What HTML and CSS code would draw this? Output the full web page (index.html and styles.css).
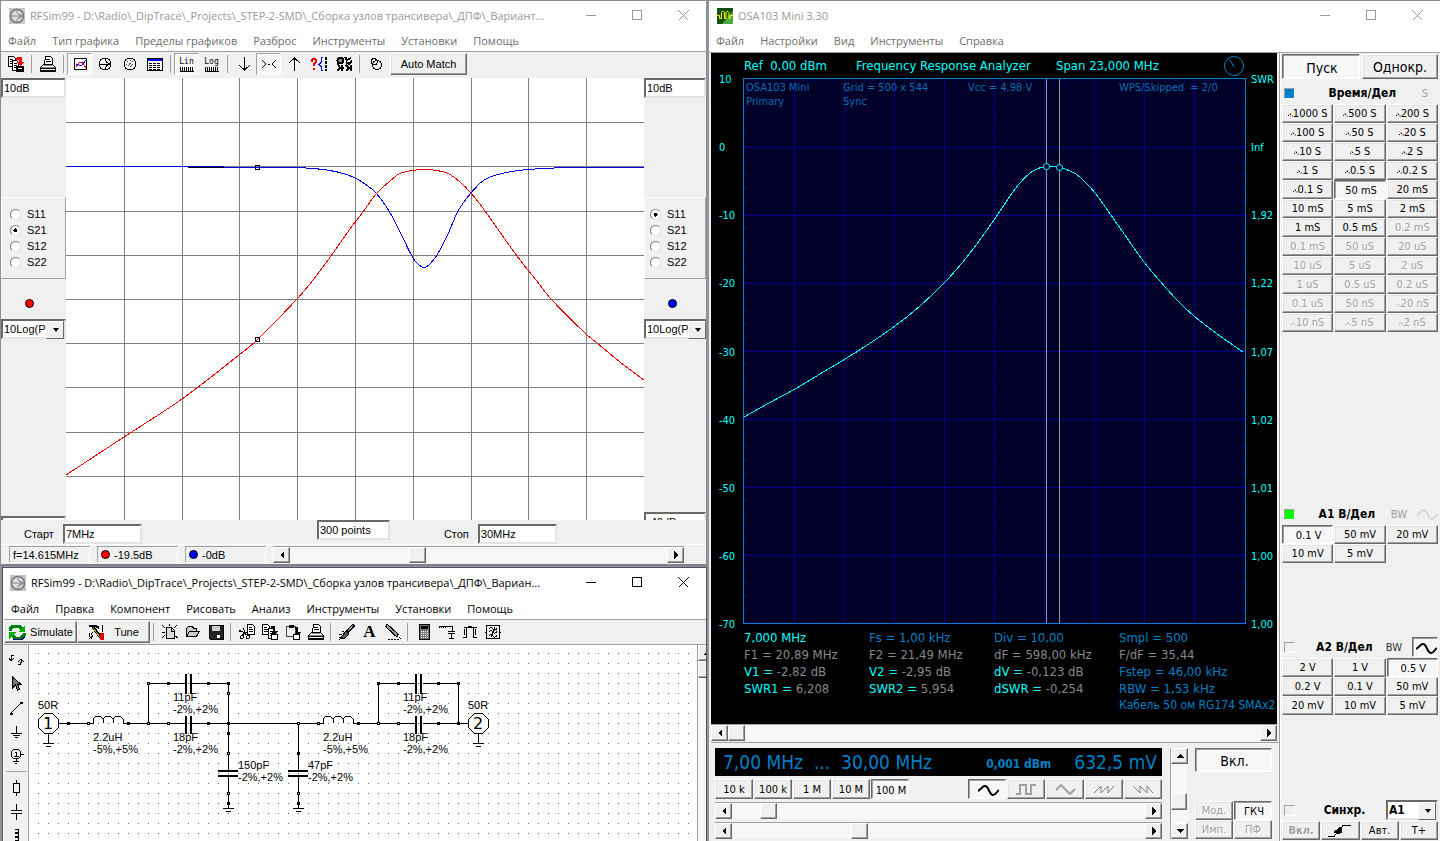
FILE: index.html
```html
<!DOCTYPE html>
<html lang="ru">
<head>
  <meta charset="UTF-8">
  <title>RFSim99 / OSA103 Mini</title>
  <link rel="stylesheet" href="styles.css">
</head>
<body>

  <!-- Общие значки -->
  <svg class="defs">
    <symbol id="app" viewBox="0 0 16 16">
      <path d="M0 0h16v16H0z" fill="#c4c4c4" stroke="none"/>
      <circle cx="8" cy="8" r="6.5" fill="#ddd" stroke="#777" stroke-width="1.5"/>
      <path d="M1 8h13M8 2q-1 5 6 6M8 14q-1-5 6-6M10 6l3 2-3 3" fill="none" stroke="#888"/>
    </symbol>
    <symbol id="min" viewBox="0 0 11 11"><path d="M0 5.5h10"/></symbol>
    <symbol id="max" viewBox="0 0 11 11"><path d="M.5.5h9v9h-9z"/></symbol>
    <symbol id="close" viewBox="0 0 11 11"><path d="M.5.5l10 10M10.500.5l-10 10"/></symbol>
    <symbol id="left" viewBox="0 0 8 8"><path d="M6 0v8L2 4z" fill="#000" stroke="none"/></symbol>
    <symbol id="right" viewBox="0 0 8 8"><path d="M2 0v8l4-4z" fill="#000" stroke="none"/></symbol>
    <symbol id="up" viewBox="0 0 8 8"><path d="M0 6h8L4 2z" fill="#000" stroke="none"/></symbol>
    <symbol id="down" viewBox="0 0 8 8"><path d="M0 2h8L4 6z" fill="#000" stroke="none"/></symbol>
    <symbol id="sine" viewBox="0 0 21 11"><path d="M0 6C4 4 4 1 7 1c4 0 4 9 8 9 3 0 3-3 6-5"/></symbol>
    <symbol id="printer" viewBox="0 0 16 16">
      <path d="M4.500 8.500l1-8h5l2 2v6M6 3.500h4M6 5.500h5M.5 11.500l3-3h9l3 3v3h-15z" fill="#fff"/>
      <path d="M1 11.500h14M4 9.500h8" stroke="#888"/><path d="M0 12.500h16M0 15.500h16"/>
    </symbol>
    <symbol id="copy" viewBox="0 0 16 16">
      <path d="M.5.5h5l2 2v8h-7zM2 3.500h3M2 5.500h4M2 7.500h4" fill="#fff"/>
      <path d="M6.500 4.500h4l2 2v8h-6zM8 7.500h3M8 9.500h3M8 11.500h3" fill="#fff"/>
      <path d="M9 2h4v5h3l-4 4-3-3h2V4H9z" fill="#000" stroke="none"/>
      <path d="M9.500 10.500h6v5h-6z" fill="#fff"/>
    </symbol>
  </svg>

  <main class="desktop">

    <div class="left">

      <!-- Графики RFSim99 -->
      <section class="window inactive charts">
        <header class="titlebar">
          <svg class="app"><use href="#app"/></svg>
          <h1>RFSim99 - D:\Radio\_DipTrace\_Projects\_STEP-2-SMD\_Сборка узлов трансивера\_ДПФ\_Вариант...</h1>
          <button aria-label="Свернуть"><svg><use href="#min"/></svg></button>
          <button aria-label="Развернуть"><svg><use href="#max"/></svg></button>
          <button aria-label="Закрыть"><svg><use href="#close"/></svg></button>
        </header>
        <nav class="menu">
          <button>Файл</button><button>Тип графика</button><button>Пределы графиков</button><button>Разброс</button><button>Инструменты</button><button>Установки</button><button>Помощь</button>
        </nav>
        <div class="toolbar">
          <button aria-label="Копировать и сохранить">
            <svg viewBox="0 0 16 16">
              <path d="M.5.5h5l2 2v8h-7zM2 3.500h3M2 5.500h4M2 7.500h4" fill="#fff"/>
              <path d="M4.500 4.500h4l2 2v8h-6zM6 7.500h3M6 9.500h3M6 11.500h3" fill="#fff"/>
              <path d="M9 1h4l1 1v4h2l-4 4-4-4h3V4H8z" fill="#f00" stroke="none"/>
              <path d="M8.500 10.500h7v5h-7z" fill="#000"/><path d="M10 12.500h4" stroke="#fff"/>
            </svg>
          </button>
          <i class="sep"></i>
          <button aria-label="Печать"><svg><use href="#printer"/></svg></button>
          <i class="sep"></i>
          <button class="down" aria-label="График">
            <svg viewBox="0 0 16 16"><path d="M2.500 2.500h12v11h-12z" fill="#fff"/><path d="M4 11l3-4 3-1 4 6" stroke="#f00"/><path d="M4 8l3 1h3l4-5" stroke="#00f"/></svg>
          </button>
          <button aria-label="Диаграмма Смита">
            <svg viewBox="0 0 16 16"><circle cx="8" cy="8" r="6"/><path d="M2 8h12M8 2q0 5 6 6M8 14q0-5 6-6"/></svg>
          </button>
          <button aria-label="Полярный график">
            <svg viewBox="0 0 16 16"><circle cx="8" cy="8" r="6"/><path d="M4 8h9M8 4v9M5 5l6 6M11 5l-6 6" stroke-dasharray="1 2" stroke="#555"/></svg>
          </button>
          <button aria-label="Таблица">
            <svg viewBox="0 0 16 16"><path d="M.5 2.500h15v12H.5z" fill="#fff"/><path d="M1 4h14" stroke="#00f" stroke-width="2"/><path d="M2 7.500h12M2 9.500h12M2 11.500h12M2 13.500h12" stroke-dasharray="3 1"/></svg>
          </button>
          <i class="sep"></i>
          <button class="down scale">Lin</button>
          <button class="scale">Log</button>
          <i class="sep"></i>
          <button aria-label="Вниз"><svg viewBox="0 0 16 16"><path d="M8.500 1v13M3 9l5.500 5L14 9"/></svg></button>
          <button class="down" aria-label="Сжать"><svg viewBox="0 0 16 16"><path d="M1 4l4 4-4 4M15 4l-4 4 4 4M7 8.500h2"/></svg></button>
          <button aria-label="Вверх"><svg viewBox="0 0 16 16"><path d="M8.500 15V2M3 7l5.500-5L14 7"/></svg></button>
          <button aria-label="Параметры">
            <svg viewBox="0 0 16 16"><path d="M1 6V4l1-1h2l1 1v2L3 8v2M3 12v2" stroke="#f00" stroke-width="2"/><path d="M12 1.500h-2v5l-2 2 2 2v4h2" stroke="#00f"/><path d="M15 1v14" stroke-width="2" stroke-dasharray="3 1"/></svg>
          </button>
          <button aria-label="Оптимизация">
            <svg viewBox="0 0 16 16"><circle cx="4.5" cy="4.5" r="3" fill="#888" stroke-width="2"/><path d="M9 1l2 3 4-2M10 6l3 2 3-3M2 8l2 4-3 3M6 9v6M3 12h5M10 9l3 3-3 3M15 9v6" stroke-width="2"/></svg>
          </button>
          <i class="sep"></i>
          <button aria-label="Подстройка">
            <svg viewBox="0 0 16 16"><circle cx="9" cy="9" r="4.5"/><path d="M3 4l3-2 4 3-2 4-4-1z"/></svg>
          </button>
          <button class="raised auto">Auto Match</button>
        </div>

        <div class="graph">
          <aside class="side">
            <input class="field" aria-label="Верхний предел слева" value="10dB">
            <fieldset>
              <label><input type="radio" name="l">S11</label>
              <label><input type="radio" name="l" checked>S21</label>
              <label><input type="radio" name="l">S12</label>
              <label><input type="radio" name="l">S22</label>
            </fieldset>
            <i class="dot red"></i>
            <span class="combo"><select aria-label="Формат слева"><option>10Log(P)</option></select></span>
            <span class="cut"><input class="field" aria-label="Нижний предел слева"></span>
          </aside>

          <svg class="plot" viewBox="66 78 578 442" preserveAspectRatio="none">
            <path class="grid" d="M124.500 78v442M182.500 78v442M239.500 78v442M297.500 78v442M355.500 78v442M413.500 78v442M471.500 78v442M528.500 78v442M586.500 78v442M66 122.500h578M66 166.500h578M66 211.500h578M66 255.500h578M66 299.500h578M66 343.500h578M66 387.500h578M66 432.500h578M66 476.500h578"/>
            <path d="M188 167.500h106M554 167.500h90" stroke="#000"/>
            <path class="curve" stroke="#0000e8" data-points="66,166.5 187,166.5 257,167.5 294,167.5 313,168.5 330,170.5 345,174 355,178 365,184 376,193 389,211 400,232 413,258 419,265 424,267.5 429,265 437,255 448,234 458,211 471,193 484,180 500,174 515,171 528,169.5 554,168 600,167.5 644,167.5"/>
            <path class="curve" stroke="#e80000" data-points="66,475 124,437 182,399 239,355 257,340 297,299 313,280 331,256 350,229 363,212 376,194 389,182 399,174 412,170.500 424,169.500 437,170.500 449,174 460,182 471,193 485,211 517,256 536,280 551,299 586,334 597,343 620,362 644,380"/>
            <path d="M255.500 165.500h4v4h-4zM255.500 337.500h4v4h-4z" stroke="#000" fill="none"/>
          </svg>

          <aside class="side right">
            <input class="field" aria-label="Верхний предел справа" value="10dB">
            <fieldset>
              <label><input type="radio" name="r" checked>S11</label>
              <label><input type="radio" name="r">S21</label>
              <label><input type="radio" name="r">S12</label>
              <label><input type="radio" name="r">S22</label>
            </fieldset>
            <i class="dot blue"></i>
            <span class="combo"><select aria-label="Формат справа"><option>10Log(P)</option></select></span>
            <span class="cut"><input class="field" aria-label="Нижний предел справа" value="-40dB"></span>
          </aside>
        </div>

        <div class="sweep">
          <label>Старт <input class="field" value="7MHz"></label>
          <input class="field points" aria-label="Число точек" value="300 points">
          <label>Стоп <input class="field" value="30MHz"></label>
        </div>
        <footer class="status">
          <output>f=14.615MHz</output>
          <output><i class="dot red"></i>-19.5dB</output>
          <output><i class="dot blue"></i>-0dB</output>
          <div class="scroll">
            <button aria-label="Влево"><svg><use href="#left"/></svg></button>
            <input type="range" aria-label="Маркер" value="33">
            <button aria-label="Вправо"><svg><use href="#right"/></svg></button>
          </div>
        </footer>
      </section>

      <!-- Схема RFSim99 -->
      <section class="window schematic">
        <header class="titlebar">
          <svg class="app"><use href="#app"/></svg>
          <h1>RFSim99 - D:\Radio\_DipTrace\_Projects\_STEP-2-SMD\_Сборка узлов трансивера\_ДПФ\_Вариан...</h1>
          <button aria-label="Свернуть"><svg><use href="#min"/></svg></button>
          <button aria-label="Развернуть"><svg><use href="#max"/></svg></button>
          <button aria-label="Закрыть"><svg><use href="#close"/></svg></button>
        </header>
        <nav class="menu">
          <button>Файл</button><button>Правка</button><button>Компонент</button><button>Рисовать</button><button>Анализ</button><button>Инструменты</button><button>Установки</button><button>Помощь</button>
        </nav>
        <div class="toolbar">
          <button class="raised">
            <svg class="wide" viewBox="0 0 18 16"><path d="M2 7V5l3-3h6l3 3M16 9v2l-3 3H7l-3-3" stroke="#008000" stroke-width="3"/><path d="M17 1v7h-7zM1 15V8h7z" fill="#00b000" stroke="none"/><path d="M5 15.500h9l3-3" stroke="#000080"/></svg>Simulate
          </button>
          <button class="raised tune">
            <svg class="wide" viewBox="0 0 18 16"><path d="M1 2h7l3 2" stroke-width="2"/><path d="M5 3l8 11" stroke-width="3"/><path d="M5 4l7 9" stroke="#c0b000"/><path d="M14.500 1v7"/><path d="M12 9h3v6h-3z" fill="#e00000" stroke="#e00000"/><path d="M5 8l-2 2 2 2-4 3M1 9v3l3 3"/></svg>Tune
          </button>
          <i class="sep"></i>
          <button aria-label="Новый"><svg viewBox="0 0 16 16"><path d="M4.500 3.500h5l3 3v8h-8z" fill="#ddd"/><path d="M9.500 3v4h3M0 1l3 3M15 1l-3 3M0 14l3-3M16 14l-3-2M0 8h3M7 0v2" /></svg></button>
          <button aria-label="Открыть"><svg viewBox="0 0 16 16"><path d="M1.500 12.500v-8l2-2h4l1 2h3v2M1.500 12.500l3-5h10l-3 5z" fill="#ccc"/></svg></button>
          <button aria-label="Сохранить"><svg viewBox="0 0 16 16"><path d="M1 1h14v14H2l-1-1z" fill="#222"/><path d="M4 2h8v5H4z" fill="#ccc" stroke="none"/><path d="M9 11h3v3H9z" fill="#fff" stroke="none"/></svg></button>
          <i class="sep"></i>
          <button aria-label="Вырезать"><svg viewBox="0 0 16 16"><path d="M8.500.5h5l2 2v8h-7z" fill="#fff"/><path d="M10 3.500h3M10 5.500h4M10 7.500h4M0 6l4 2 5 4M4 4l2 4-3 4"/><circle cx="3" cy="13" r="1.5"/><circle cx="9" cy="13" r="1.5"/><path d="M0 7l8 2"/></svg></button>
          <button aria-label="Копировать"><svg><use href="#copy"/></svg></button>
          <button aria-label="Вставить"><svg viewBox="0 0 16 16"><path d="M1.500 2.500h9v10h-9z" fill="#eee" stroke="#444"/><path d="M4 1h4v2H4z" fill="#000"/><path d="M10 3h3v5h3l-4 4-3-3h2V5h-1z" fill="#000" stroke="none"/><path d="M8.500 10.500h6v5h-6z" fill="#fff"/></svg></button>
          <button aria-label="Печать"><svg><use href="#printer"/></svg></button>
          <i class="sep"></i>
          <button aria-label="Очистить"><svg viewBox="0 0 16 16"><path d="M15 1L8 8" stroke-width="4"/><path d="M14 1L9 7" stroke="#aaa"/><path d="M7 7l3 3-4 4-5 1z" fill="#555"/><path d="M0 10.500h3M0 13.500h2M3 7.500h2"/></svg></button>
          <button class="letter">A</button>
          <button aria-label="Карандаш"><svg viewBox="0 0 16 16"><path d="M1 1l12 11" stroke-width="4"/><path d="M2 2l10 9" stroke="#999" stroke-width="2"/><path d="M12 11l4 4M3 15.500h11" stroke-dasharray="2 1"/></svg></button>
          <i class="sep"></i>
          <button aria-label="Калькулятор"><svg viewBox="0 0 16 16"><path d="M3.500.5h10v15h-10z" fill="#777"/><path d="M5 3h7" stroke-width="3"/><path d="M5 7.500h8M5 9.500h8M5 11.500h8M5 13.500h8" stroke="#fff" stroke-dasharray="1 1"/></svg></button>
          <button aria-label="Согласование"><svg viewBox="0 0 16 16"><path d="M0 4V2h2v2V2h2v2V2h2v2M6 2.500h7v5M9 7.500h7M9 9.500h7M12.500 9v5M10 14.500h5"/></svg></button>
          <button aria-label="П-контур"><svg viewBox="0 0 16 16"><path d="M2 3.500h13M4.500 4v9M11.500 4v9M3 5l-1 3 1 3M13 5l1 3-1 3M1 13.500h4M11 13.500h4M6 2.500h4"/></svg></button>
          <button aria-label="Фильтр"><svg viewBox="0 0 16 16"><path d="M1.500 1.500h13v13h-13zM0 8h2M14 8h2M4 5q2-3 4 0t4-1M4 8q2-3 4 0t4-1M4 12q2-3 4 0t4-1M10 3L6 13"/></svg></button>
        </div>

        <div class="sheet">
          <div class="tools">
            <button aria-label="Повернуть"><svg viewBox="0 0 16 16"><path d="M6 3.500H4l-1 2V8M1 6l2 3 3-3M10 12.500h2l1-2V8M10 10l3-3 3 3"/></svg></button>
            <button aria-label="Выбор"><svg viewBox="0 0 16 16"><path d="M4.500 1v11l3-3 2 5 2-1-2-5h3z" fill="#777"/></svg></button>
            <button aria-label="Проводник"><svg viewBox="0 0 16 16"><path d="M3 13L13 3M2 13h2v1H2zM12 2h2v1h-2z"/></svg></button>
            <button aria-label="Земля"><svg viewBox="0 0 16 16"><path d="M8.500 2v7M3 9.500h11M5 11.500h7M7 13.500h3"/></svg></button>
            <button aria-label="Порт"><svg viewBox="0 0 16 16"><circle cx="8" cy="6" r="5"/><path d="M7 4.500h1.500v4M6 8.500h5M13 6.500h3M8.500 11v2M5 13.500h6M7 15.500h2"/></svg></button>
            <hr>
            <button aria-label="Резистор"><svg viewBox="0 0 16 16"><path d="M8.500 0v3M5.500 3.500h6v9h-6zM8.500 13v3"/></svg></button>
            <button aria-label="Конденсатор"><svg viewBox="0 0 16 16"><path d="M8.500 0v6M3 6.500h11M3 9.500h11M8.500 10v6"/></svg></button>
            <button aria-label="Катушка"><svg viewBox="0 0 16 16"><path d="M7 1c5 0 5 4 0 4 5 0 5 4 0 4 5 0 5 4 0 4v3"/></svg></button>
          </div>
          <div class="paper">
            <svg class="circuit" width="669" height="196" viewBox="29 645 669 196">
              <g class="wire">
                <path d="M58 723.500h35M124 723.500h61M192 723.500h131M354 723.500h61M423 723.500h46"/>
                <path d="M148.500 723v-40h37M192 683.500h36.500v86M378.500 723v-40h37M423 683.500h35.500v40M298.500 723v47M228.500 777v31M298.500 777v31"/>
                <path d="M93 724v-5l3-3h4l3 3v4-4l3-3h4l3 3v4-4l3-3h4l3 3v5M323 724v-5l3-3h4l3 3v4-4l3-3h4l3 3v4-4l3-3h4l3 3v5"/>
                <path d="M223 808.500h11M226 811.500h5M293 808.500h11M296 811.500h5"/>
                <path d="M44.500 713.500h8l6 6v8l-6 6h-8l-6-6v-8zM474.500 713.500h8l6 6v8l-6 6h-8l-6-6v-8z" fill="#fff"/>
                <path d="M48.500 734v9M43 743.500h11M46 746.500h5M478.500 734v9M473 743.500h11M476 746.500h5"/>
              </g>
              <path class="plates" d="M186 674v20M191 674v20M186 716v18M191 716v18M416 674v20M421 674v20M416 716v18M421 716v18M218 771h20M218 776h20M288 771h20M288 776h20"/>
              <path class="nodes" d="M67 722h3v3h-3zM127 722h3v3h-3zM207 722h3v3h-3zM227 722h3v3h-3zM357 722h3v3h-3zM437 722h3v3h-3zM457 722h3v3h-3zM167 682h3v3h-3zM207 682h3v3h-3zM227 682h3v3h-3zM377 682h3v3h-3zM397 682h3v3h-3zM437 682h3v3h-3zM457 682h3v3h-3zM227 732h3v3h-3zM227 802h3v3h-3zM297 752h3v3h-3zM297 802h3v3h-3z"/>
              <path class="pins" d="M87.500 722.500h2v2h-2zM147.500 682.500h2v2h-2zM147.500 722.500h2v2h-2zM167.500 722.500h2v2h-2zM227.500 692.500h2v2h-2zM297.500 722.500h2v2h-2zM317.500 722.500h2v2h-2zM377.500 722.500h2v2h-2zM397.500 722.500h2v2h-2zM227.500 752.500h2v2h-2zM227.500 792.500h2v2h-2zM297.500 792.500h2v2h-2z"/>
              <text class="port" x="48" y="729">1</text><text class="port" x="478" y="729">2</text>
              <text x="38" y="709">50R</text><text x="468" y="709">50R</text>
              <text x="93" y="741">2.2uH</text><text x="93" y="753">-5%,+5%</text>
              <text x="173" y="701">11pF</text><text x="173" y="713">-2%,+2%</text>
              <text x="173" y="741">18pF</text><text x="173" y="753">-2%,+2%</text>
              <text x="238" y="769">150pF</text><text x="238" y="781">-2%,+2%</text>
              <text x="308" y="769">47pF</text><text x="308" y="781">-2%,+2%</text>
              <text x="323" y="741">2.2uH</text><text x="323" y="753">-5%,+5%</text>
              <text x="403" y="701">11pF</text><text x="403" y="713">-2%,+2%</text>
              <text x="403" y="741">18pF</text><text x="403" y="753">-2%,+2%</text>
            </svg>
          </div>
          <div class="scroll vertical">
            <button aria-label="Вверх"><svg><use href="#up"/></svg></button>
            <input type="range" aria-label="Прокрутка схемы" value="0">
          </div>
        </div>
      </section>
    </div>

    <!-- OSA103 Mini -->
    <section class="window inactive osa">
      <header class="titlebar">
        <svg class="app" viewBox="0 0 16 16"><path d="M0 0h16v16H0z" fill="#145014" stroke="none"/><path d="M5 16L16 3v13z" fill="#4cae3c" stroke="none"/><path d="M0 7.500h2.500v3h2v-6l1-1h1l1 1v6h1.500v-6l1-1h1l1 1v6h1v-3h3" fill="none" stroke="#ff0"/></svg>
        <h1>OSA103 Mini 3.30</h1>
        <button aria-label="Свернуть"><svg><use href="#min"/></svg></button>
        <button aria-label="Развернуть"><svg><use href="#max"/></svg></button>
        <button aria-label="Закрыть"><svg><use href="#close"/></svg></button>
      </header>
      <nav class="menu">
        <button>Файл</button><button>Настройки</button><button>Вид</button><button>Инструменты</button><button>Справка</button>
      </nav>

      <div class="osa-body">
        <div class="osa-main">
          <div class="screen">
            <div class="screen-head">
              <span>Ref&nbsp; 0,00 dBm</span><span>Frequency Response Analyzer</span><span>Span 23,000 MHz</span>
              <svg viewBox="0 0 20 20"><circle cx="10" cy="10" r="9.500"/><path d="M10 11L6 4"/></svg>
            </div>
            <div class="axis"><span>10</span><span>0</span><span>-10</span><span>-20</span><span>-30</span><span>-40</span><span>-50</span><span>-60</span><span>-70</span></div>
            <div class="trace">
              <svg viewBox="743 78 503 547" preserveAspectRatio="none">
                <path class="blue-grid" d="M794.500 79v545M844.500 79v545M894.500 79v545M944.500 79v545M994.500 79v545M1044.500 79v545M1094.500 79v545M1144.500 79v545M1194.500 79v545M744 147.500h501M744 215.500h501M744 283.500h501M744 351.500h501M744 419.500h501M744 487.500h501M744 555.500h501"/>
                <path class="blue-grid ticks-x" d="M754 80.500h490M754 622.500h490"/>
                <path class="blue-grid ticks-y" d="M745.500 92v531M994.500 92v531M1243.500 92v531"/>
                <path stroke="#989898" d="M1046.500 79v545M1059.500 79v545"/>
                <path stroke="#0080c8" fill="none" d="M743.500 78.500h502v545h-502z"/>
                <path class="curve" stroke="#0ff" data-points="744,417 769,403 795,389 820,374 858,351 895,326 920,306 947,280 970,253 994,220 1010,196 1019,184 1030,173 1038,168.500 1046,166.500 1059,167.500 1070,171 1080,177 1095,193 1108,211 1120,228 1144,262 1159,280 1178,301 1194,316 1220,336 1243,352"/>
                <circle class="marker" cx="1046.500" cy="166.500" r="3"/><circle class="marker" cx="1059.500" cy="167.500" r="3"/>
              </svg>
              <div class="info"><span>OSA103 Mini<br>Primary</span><span>Grid = 500 x 544<br>Sync</span><span>Vcc = 4,98 V</span><span>WPS/Skipped&nbsp; = 2/0</span></div>
            </div>
            <div class="axis swr"><span>SWR</span><span>Inf</span><span>1,92</span><span>1,22</span><span>1,07</span><span>1,02</span><span>1,01</span><span>1,00</span><span>1,00</span></div>
            <div class="readout">
              <b>7,000 MHz</b><em>Fs = 1,00 kHz</em><em>Div = 10,00</em><em>Smpl = 500</em>
              <span>F1 = 20,89 MHz</span><span>F2 = 21,49 MHz</span><span>dF = 598,00 kHz</span><span>F/dF = 35,44</span>
              <span><b>V1 =</b> -2,82 dB</span><span><b>V2 =</b> -2,95 dB</span><span><b>dV =</b> -0,123 dB</span><em>Fstep = 46,00 kHz</em>
              <span><b>SWR1 =</b> 6,208</span><span><b>SWR2 =</b> 5,954</span><span><b>dSWR =</b> -0,254</span><em>RBW = 1,53 kHz</em>
              <em class="cable">Кабель 50 ом RG174 SMAx2</em>
            </div>
          </div>
          <div class="scroll">
            <button aria-label="Влево"><svg><use href="#left"/></svg></button>
            <input type="range" aria-label="Прокрутка" value="0">
            <button aria-label="Вправо"><svg><use href="#right"/></svg></button>
          </div>

          <div class="generator">
            <div class="gen-main">
              <div class="display"><span>7,00 MHz&nbsp; ...&nbsp; 30,00 MHz</span><b>0,001 dBm</b><span>632,5 mV</span></div>
              <div class="gen-buttons">
                <button class="raised">10 k</button><button class="raised">100 k</button><button class="raised">1 M</button><button class="raised">10 M</button><button class="sunken">100 M</button>
                <i class="spring"></i>
                <button class="sunken" aria-label="Синус"><svg class="wave"><use href="#sine"/></svg></button>
                <button class="raised off" aria-label="Меандр"><svg class="wave" viewBox="0 0 21 11"><path d="M0 10h4V1h6v9h5V1h5"/></svg></button>
                <button class="raised off" aria-label="Треугольник"><svg class="wave" viewBox="0 0 21 11"><path d="M1 6l5-5 9 9 5-5"/></svg></button>
                <button class="raised off" aria-label="Пила"><svg class="wave saw" viewBox="0 0 21 11"><path d="M0 9l7-7v7l7-7v7l6-7"/></svg></button>
                <button class="raised off" aria-label="Обратная пила"><svg class="wave saw" viewBox="0 0 21 11"><path d="M0 2l7 7V2l7 7V2l6 7"/></svg></button>
              </div>
              <div class="scroll">
                <button aria-label="Меньше"><svg><use href="#left"/></svg></button>
                <input type="range" aria-label="Начальная частота" value="7">
                <button aria-label="Больше"><svg><use href="#right"/></svg></button>
              </div>
              <div class="scroll">
                <button aria-label="Меньше"><svg><use href="#left"/></svg></button>
                <input type="range" aria-label="Конечная частота" value="30">
                <button aria-label="Больше"><svg><use href="#right"/></svg></button>
              </div>
            </div>
            <div class="scroll vertical">
              <button aria-label="Больше"><svg><use href="#up"/></svg></button>
              <input type="range" aria-label="Уровень" value="68">
              <button aria-label="Меньше"><svg><use href="#down"/></svg></button>
            </div>
            <div class="gen-mode">
              <button class="sunken big">Вкл.</button>
              <button class="raised" disabled>Мод.</button><button class="sunken">ГКЧ</button>
              <button class="raised" disabled>Имп.</button><button class="raised" disabled>ПФ</button>
            </div>
          </div>
        </div>

        <aside class="panel">
          <div class="run"><button class="sunken">Пуск</button><button class="raised">Однокр.</button></div>
          <div class="group">
            <h2><i class="led blue"></i><span>Время/Дел</span><small>S</small></h2>
            <div class="keys">
              <button class="raised roll">1000 S</button><button class="raised roll">500 S</button><button class="raised roll">200 S</button>
              <button class="raised roll">100 S</button><button class="raised roll">50 S</button><button class="raised roll">20 S</button>
              <button class="raised roll">10 S</button><button class="raised roll">5 S</button><button class="raised roll">2 S</button>
              <button class="raised roll">1 S</button><button class="raised roll">0.5 S</button><button class="raised roll">0.2 S</button>
              <button class="raised roll">0.1 S</button><button class="sunken">50 mS</button><button class="raised">20 mS</button>
              <button class="raised">10 mS</button><button class="raised">5 mS</button><button class="raised">2 mS</button>
              <button class="raised">1 mS</button><button class="raised">0.5 mS</button><button class="raised" disabled>0.2 mS</button>
              <button class="raised" disabled>0.1 mS</button><button class="raised" disabled>50 uS</button><button class="raised" disabled>20 uS</button>
              <button class="raised" disabled>10 uS</button><button class="raised" disabled>5 uS</button><button class="raised" disabled>2 uS</button>
              <button class="raised" disabled>1 uS</button><button class="raised" disabled>0.5 uS</button><button class="raised" disabled>0.2 uS</button>
              <button class="raised" disabled>0.1 uS</button><button class="raised" disabled>50 nS</button><button class="raised roll" disabled>20 nS</button>
              <button class="raised roll" disabled>10 nS</button><button class="raised roll" disabled>5 nS</button><button class="raised roll" disabled>2 nS</button>
            </div>
          </div>
          <div class="group a1">
            <h2><i class="led green"></i><span>A1 В/Дел</span><small>BW</small><svg class="wave gray"><use href="#sine"/></svg></h2>
            <div class="keys">
              <button class="sunken">0.1 V</button><button class="raised">50 mV</button><button class="raised">20 mV</button>
              <button class="raised">10 mV</button><button class="raised">5 mV</button>
            </div>
          </div>
          <div class="group a2">
            <h2><i class="led"></i><span>A2 В/Дел</span><small class="on">BW</small><button class="sunken" aria-label="Связь"><svg class="wave"><use href="#sine"/></svg></button></h2>
            <div class="keys">
              <button class="raised">2 V</button><button class="raised">1 V</button><button class="sunken">0.5 V</button>
              <button class="raised">0.2 V</button><button class="raised">0.1 V</button><button class="raised">50 mV</button>
              <button class="raised">20 mV</button><button class="raised">10 mV</button><button class="raised">5 mV</button>
            </div>
          </div>
          <div class="group sync">
            <h2><i class="led"></i><span>Синхр.</span><span class="combo"><select aria-label="Источник синхронизации"><option>A1</option></select></span></h2>
            <div class="keys four">
              <button class="raised bold" disabled>Вкл.</button>
              <button class="raised" aria-label="Фронт"><svg class="edge" viewBox="0 0 24 13"><path d="M0 12.500h6L15 1.500h8"/><path d="M6 8l7-5 1 5-4 2z" fill="#000"/></svg></button>
              <button class="raised">Авт.</button><button class="raised">T+</button>
            </div>
          </div>
        </aside>
      </div>
    </section>
  </main>

  <script src="script.js"></script>
</body>
</html>
```

FILE: styles.css
```css
* { box-sizing: border-box; }

body {
  margin: 0;
  background: #90929c;
  font-family: "Liberation Sans", Arial, sans-serif;
  font-size: 11px;
  color: #000;
  overflow: hidden;
}

svg {
  fill: none;
  stroke: #000;
  shape-rendering: crispEdges;
  display: block;
  flex: none;
}

button, input, select { font: inherit; color: inherit; }

button {
  border: 0;
  padding: 0;
  background: none;
  display: flex;
  align-items: center;
  justify-content: center;
  white-space: nowrap;
}

.defs { position: absolute; width: 0; height: 0; }

.desktop {
  display: grid;
  grid-template-columns: 707fr 731fr;
  gap: 2px;
  height: 100vh;
  min-height: 760px;
}

.left {
  display: grid;
  grid-template-rows: 566fr 274fr;
  gap: 1px;
  min-width: 0;
  min-height: 0;
}

/* Окна */
.window {
  display: flex;
  flex-direction: column;
  min-width: 0;
  min-height: 0;
  background: #f0f0f0;
  border: 1px solid #8e8e98;
  overflow: hidden;
}

.charts { border-bottom: 2px solid #808288; }
.schematic { margin-left: 2px; border: 1px solid #50565c; border-bottom: 0; padding-left: 1px; background: #fff; }
.osa { border-width: 1px 0 0; }

.titlebar {
  display: flex;
  align-items: center;
  height: 29px;
  padding-left: 8px;
  background: #fff;
  font-family: "Open Sans", "Noto Sans", sans-serif;
  font-size: 11px;
  flex: none;
}

.schematic .titlebar { padding-left: 6px; }
.titlebar h1 { flex: 1; margin: 0 0 0 5px; font-size: inherit; font-weight: normal; white-space: nowrap; overflow: hidden; }
.titlebar .app { width: 16px; height: 16px; shape-rendering: auto; }
.titlebar button { width: 46px; height: 28px; flex: none; }
.titlebar button svg { width: 11px; height: 11px; }
.inactive .titlebar { color: #999; }
.inactive .titlebar button svg { stroke: #999; }

.menu {
  display: flex;
  gap: 16px;
  height: 21px;
  padding-left: 7px;
  background: #fff;
  font-family: "Open Sans", "Noto Sans", sans-serif;
  font-size: 11px;
  flex: none;
}

.inactive .menu { color: #6d6d6d; }

.raised {
  background: #f0f0f0;
  border: 1px solid;
  border-color: #fff #696969 #696969 #fff;
  box-shadow: inset -1px -1px #a0a0a0, inset 1px 1px #e3e3e3;
}

.sunken, .toolbar .down, .scroll {
  background: repeating-conic-gradient(#fff 0 25%, #f0f0f0 0 50%) 0 0 / 2px 2px;
}

.sunken, .toolbar .down {
  border: 1px solid;
  border-color: #696969 #fff #fff #696969;
}

.sunken { box-shadow: inset 1px 1px #a0a0a0; padding: 2px 0 0 2px; }

button:disabled { color: #a0a0a0; text-shadow: 1px 1px #fff; }

/* Панель инструментов */
.toolbar {
  display: flex;
  align-items: center;
  height: 27px;
  padding: 0 0 2px 2px;
  border-top: 1px solid #a0a0a0;
  background: #f0f0f0;
  flex: none;
}

.toolbar button { width: 25px; height: 22px; flex: none; }
.toolbar svg { width: 16px; height: 16px; }
.toolbar .down { border-color: #a0a0a0 #fff #fff #a0a0a0; }
.sep { width: 7px; height: 18px; flex: none; background: linear-gradient(#a0a0a0, #a0a0a0) 3px 0 / 1px 100% no-repeat; }
.toolbar .auto { width: 77px; margin-left: 2px; }

.toolbar .scale {
  flex-direction: column;
  font-family: "DejaVu Sans Mono", monospace;
  font-size: 8px;
  line-height: 10px;
}

.scale::after {
  content: "";
  width: 14px;
  height: 4px;
  border-bottom: 1px solid #000;
  background: repeating-linear-gradient(90deg, #000 0 1px, transparent 1px 2px);
}

.schematic .toolbar { height: 26px; padding: 0 0 1px; border-bottom: 1px solid #a0a0a0; }
.schematic .toolbar button { width: 23px; }
.schematic .sep { width: 8px; }
.schematic .toolbar .raised { width: 73px; gap: 4px; }
.schematic .toolbar .tune { gap: 8px; }
.toolbar .wide { width: 18px; }
.toolbar .letter { font: bold 17px "Liberation Serif", serif; }

/* Графики */
.graph { flex: 1; display: flex; min-height: 0; background: #fff; }
.side { width: 65px; flex: none; display: flex; flex-direction: column; background: #f0f0f0; overflow: hidden; }
.side.right { width: 62px; }

.field {
  width: 100%;
  height: 20px;
  padding: 0 1px;
  border: 2px solid;
  border-color: #696969 #e3e3e3 #e3e3e3 #696969;
  background: #fff;
  border-radius: 0;
}

.side > .field { flex: none; }

fieldset {
  margin: 99px 0 0;
  padding: 8px 0 8px 8px;
  border: 1px solid;
  border-color: #fff #a0a0a0 #a0a0a0 #fff;
  min-width: 0;
  height: 82px;
}

.right fieldset { padding-left: 5px; }
fieldset label { display: flex; align-items: center; gap: 6px; height: 16px; }

fieldset input {
  appearance: none;
  width: 11px;
  height: 11px;
  margin: 0;
  border-radius: 50%;
  border: 1px solid;
  border-color: #808080 #e3e3e3 #e3e3e3 #808080;
  background: #fff;
}

fieldset input:checked { background: radial-gradient(circle, #000 2px, #fff 2px); }

.dot { width: 9px; height: 9px; flex: none; border: 1px solid #000; border-radius: 50%; background: #00f; }
.dot.red { background: #f00; }
.side .dot { margin: 20px 0 11px 24px; }

.combo { position: relative; display: block; height: 20px; flex: none; }
.right .combo { margin-right: -2px; }

.combo select {
  appearance: none;
  width: 100%;
  height: 20px;
  padding: 0 0 0 1px;
  border: 2px solid;
  border-color: #696969 #e3e3e3 #e3e3e3 #696969;
  border-radius: 0;
  background: #fff;
}

.combo::before {
  content: "";
  position: absolute;
  top: 2px;
  right: 2px;
  width: 16px;
  height: 16px;
  background: #f0f0f0;
  border: 1px solid;
  border-color: #fff #696969 #696969 #fff;
}

.combo::after {
  content: "";
  position: absolute;
  top: 9px;
  right: 7px;
  border: 3px solid transparent;
  border-top: 4px solid #000;
  border-bottom: 0;
}

.cut { display: block; height: 4px; margin-top: auto; overflow: hidden; flex: none; }
.right .cut { height: 8px; }

.plot { flex: 1; min-width: 0; height: 100%; }
.plot path, .trace path { vector-effect: non-scaling-stroke; }
.grid { stroke: #808080; }

.sweep { display: flex; height: 24px; padding: 0 0 0 23px; flex: none; }
.sweep label { display: flex; align-items: center; gap: 9px; padding-top: 3px; }
.sweep label .field { width: 79px; }
.sweep .points { width: 73px; margin: 0 54px 0 175px; }

.status {
  display: flex;
  align-items: center;
  gap: 7px;
  height: 20px;
  padding: 0 22px 0 8px;
  border-top: 1px solid #fff;
  flex: none;
}

.status output {
  display: flex;
  align-items: center;
  gap: 4px;
  width: 81px;
  height: 17px;
  padding-left: 3px;
  border: 1px solid;
  border-color: #a0a0a0 #fff #fff #a0a0a0;
}

.status .scroll { flex: 1; }

/* Полосы прокрутки */
.scroll { display: flex; height: 17px; flex: none; border-top: 1px solid #a0a0a0; }

.scroll button {
  width: 17px;
  height: 16px;
  flex: none;
  background: #f0f0f0;
  border: 1px solid;
  border-color: #fff #696969 #696969 #fff;
  box-shadow: inset -1px -1px #a0a0a0;
}

.scroll svg { width: 8px; height: 8px; }
.scroll input { appearance: none; flex: 1; min-width: 0; min-height: 0; margin: 0; background: none; }

.scroll input::-webkit-slider-thumb {
  appearance: none;
  width: 17px;
  height: 16px;
  background: #f0f0f0;
  border: 1px solid;
  border-color: #fff #696969 #696969 #fff;
  box-shadow: inset -1px -1px #a0a0a0;
}

.scroll.vertical { flex-direction: column; width: 17px; height: auto; border-top: 0; border-left: 1px solid #a0a0a0; }
.vertical input { writing-mode: vertical-lr; width: 16px; }
.vertical input::-webkit-slider-thumb { width: 16px; height: 17px; }

/* Схема */
.schematic .menu { height: 22px; }
.sheet { flex: 1; display: flex; min-height: 0; overflow: hidden; }
.tools { width: 25px; padding-top: 3px; background: #f0f0f0; border-right: 1px solid #a0a0a0; flex: none; overflow: hidden; }
.tools button { width: 24px; height: 24px; }
.tools svg { width: 16px; height: 16px; }
.tools hr { margin: 3px 2px 4px; border: 0; border-top: 1px solid #a0a0a0; }

.paper {
  flex: 1;
  min-width: 0;
  overflow: hidden;
  background: conic-gradient(from 0deg at 1px 1px, transparent 75%, #606060 0) 9px 8px / 10px 10px;
}

.circuit text { fill: #000; stroke: none; font-size: 11px; }
.circuit .port { font-family: "DejaVu Sans", sans-serif; font-size: 16px; text-anchor: middle; }
.plates { stroke-width: 2px; }
.nodes { fill: #000; stroke: none; }
.pins { fill: #fff; }
.sheet .scroll { width: 9px; overflow: hidden; }

/* OSA103 */
.osa .menu { height: 22px; padding-bottom: 1px; }
.osa-body { flex: 1; display: flex; min-height: 0; border-top: 1px solid #a0a0a0; font-family: "DejaVu Sans Condensed", "DejaVu Sans", sans-serif; }
.osa-main { flex: 1; min-width: 0; display: flex; flex-direction: column; padding-left: 2px; border-right: 1px solid #a0a0a0; }

.screen {
  flex: 1;
  display: grid;
  grid-template-columns: 32px 1fr 31px;
  grid-template-rows: 25px 1fr 99px;
  background: #000;
  color: #0ff;
  margin-right: 2px;
  overflow: hidden;
  min-height: 0;
}

.screen-head { grid-column: 2 / 4; display: flex; align-items: center; font-size: 13px; padding-left: 1px; }
.screen-head span:nth-child(1) { width: 112px; }
.screen-head span:nth-child(2) { width: 200px; }
.screen-head svg { width: 20px; height: 20px; margin-left: auto; margin-right: 33px; stroke: #0080c8; shape-rendering: auto; }
.axis { display: flex; flex-direction: column; justify-content: space-between; margin: -5px 0 -7px; line-height: 14px; padding-left: 8px; }
.axis.swr { padding-left: 5px; }
.trace { position: relative; background: #000028; min-height: 0; min-width: 0; }
.trace > svg { position: absolute; width: 100%; height: 100%; }
.blue-grid { stroke: #000088; }
.ticks-x { stroke-width: 3px; stroke-dasharray: 1 9; }
.ticks-y { stroke-width: 3px; stroke-dasharray: 1 12.6; }
.marker { stroke: #0ff; fill: #000028; shape-rendering: auto; }
.info { position: absolute; inset: 3px 0 auto 3px; display: grid; grid-template-columns: 97fr 125fr 151fr 127fr; color: #0070b0; line-height: 14px; }

.readout {
  grid-column: 2 / 4;
  display: grid;
  grid-template-columns: repeat(3, 125fr) 158fr;
  grid-auto-rows: 17px;
  padding: 4px 0 0 1px;
  font-size: 13px;
  line-height: 17px;
  color: #888;
  white-space: nowrap;
}

.readout > * { min-width: 0; }
.readout b { color: #0ff; font-weight: normal; }
.readout em { color: #0080c8; font-style: normal; }
.readout .cable { grid-column: 4; font-size: 12px; }
.osa-main > .scroll { margin: 0 2px 1px 0; }

/* Генератор */
.generator { display: flex; height: 99px; padding: 5px 7px 2px 4px; border-top: 1px solid #a0a0a0; flex: none; }
.gen-main { flex: 1; min-width: 0; display: flex; flex-direction: column; gap: 3px; }
.display { display: flex; align-items: center; height: 28px; padding: 0 5px 0 8px; background: #000; color: #0080c8; font-size: 19px; }
.display b { font-size: 12px; margin: 3px 23px 0 auto; }
.gen-buttons { display: flex; gap: 1px; height: 20px; }
.gen-buttons button { width: 38px; height: 20px; }
.spring { flex: 1; }
.wave { width: 21px; height: 11px; stroke-width: 2px; shape-rendering: auto; }
.off .wave { stroke: #a0a0a0; }
.off .saw { stroke-width: 1px; stroke: #808080; }
.generator .vertical { margin: 0 8px; height: 91px; }
.gen-mode { display: grid; grid-template-columns: 38px 38px; grid-template-rows: 52px 18px 18px; gap: 1px; align-items: start; }
.gen-mode button { height: 19px; }
.gen-mode .big { grid-column: 1 / 3; height: 24px; font-size: 14px; }

/* Правая панель */
.panel { width: 160px; flex: none; display: flex; flex-direction: column; padding: 1px 2px 1px 1px; border-left: 1px solid #fff; }
.run { display: flex; gap: 2px; font-size: 14px; }
.run button { flex: 1; height: 25px; }
.group h2 { display: flex; align-items: center; height: 25px; margin: 0; font-size: 12px; padding: 3px 0 0 2px; }
.group h2 span:nth-child(2) { flex: 1; text-align: center; padding-left: 8px; }
.group h2 small { font-size: 11px; font-weight: normal; color: #a0a0a0; margin-right: 10px; }
.group h2 .on { color: #333; }
.led { width: 11px; height: 11px; border: 1px solid; border-color: #a0a0a0 #fff #fff #a0a0a0; }
.led.blue { background: #0080c8; }
.led.green { background: #0f0; }
.keys { display: grid; grid-template-columns: repeat(3, 1fr); grid-auto-rows: 19px; column-gap: 1px; }
.keys.four { grid-template-columns: repeat(4, 1fr); }
.a1 { margin-top: auto; }
.a2 { margin-top: 70px; }
.sync { margin-top: 81px; }
.group .gray { stroke: #b8b8b8; stroke-width: 1px; }
.a2 h2 button { width: 26px; height: 20px; }
.group .combo { width: 52px; }
.group .combo select { font-weight: bold; }
.bold { font-weight: bold; }
.edge { width: 24px; height: 13px; }

.roll::before {
  content: "";
  width: 3px;
  height: 3px;
  margin: 5px 1px 0 0;
  border: 1px dotted;
  border-width: 1px 1px 0 0;
  transform: rotate(-45deg);
}
```

FILE: script.js
```js
// Сглаженные кривые по опорным точкам (сплайн Катмулла — Рома)
document.querySelectorAll('.curve').forEach((path) => {
  const p = path.dataset.points.split(' ').map((s) => s.split(',').map(Number));
  let d = `M${p[0]}`;

  for (let i = 0; i < p.length - 1; i++) {
    const a = p[i - 1] || p[i];
    const b = p[i];
    const c = p[i + 1];
    const e = p[i + 2] || c;
    const h = (c[0] - b[0]) / 3;
    const k1 = (c[1] - a[1]) / (c[0] - a[0]);
    const k2 = (e[1] - b[1]) / (e[0] - b[0]);
    d += `C${b[0] + h},${b[1] + h * k1} ${c[0] - h},${c[1] - h * k2} ${c}`;
  }
  path.setAttribute('d', d);
});
```
